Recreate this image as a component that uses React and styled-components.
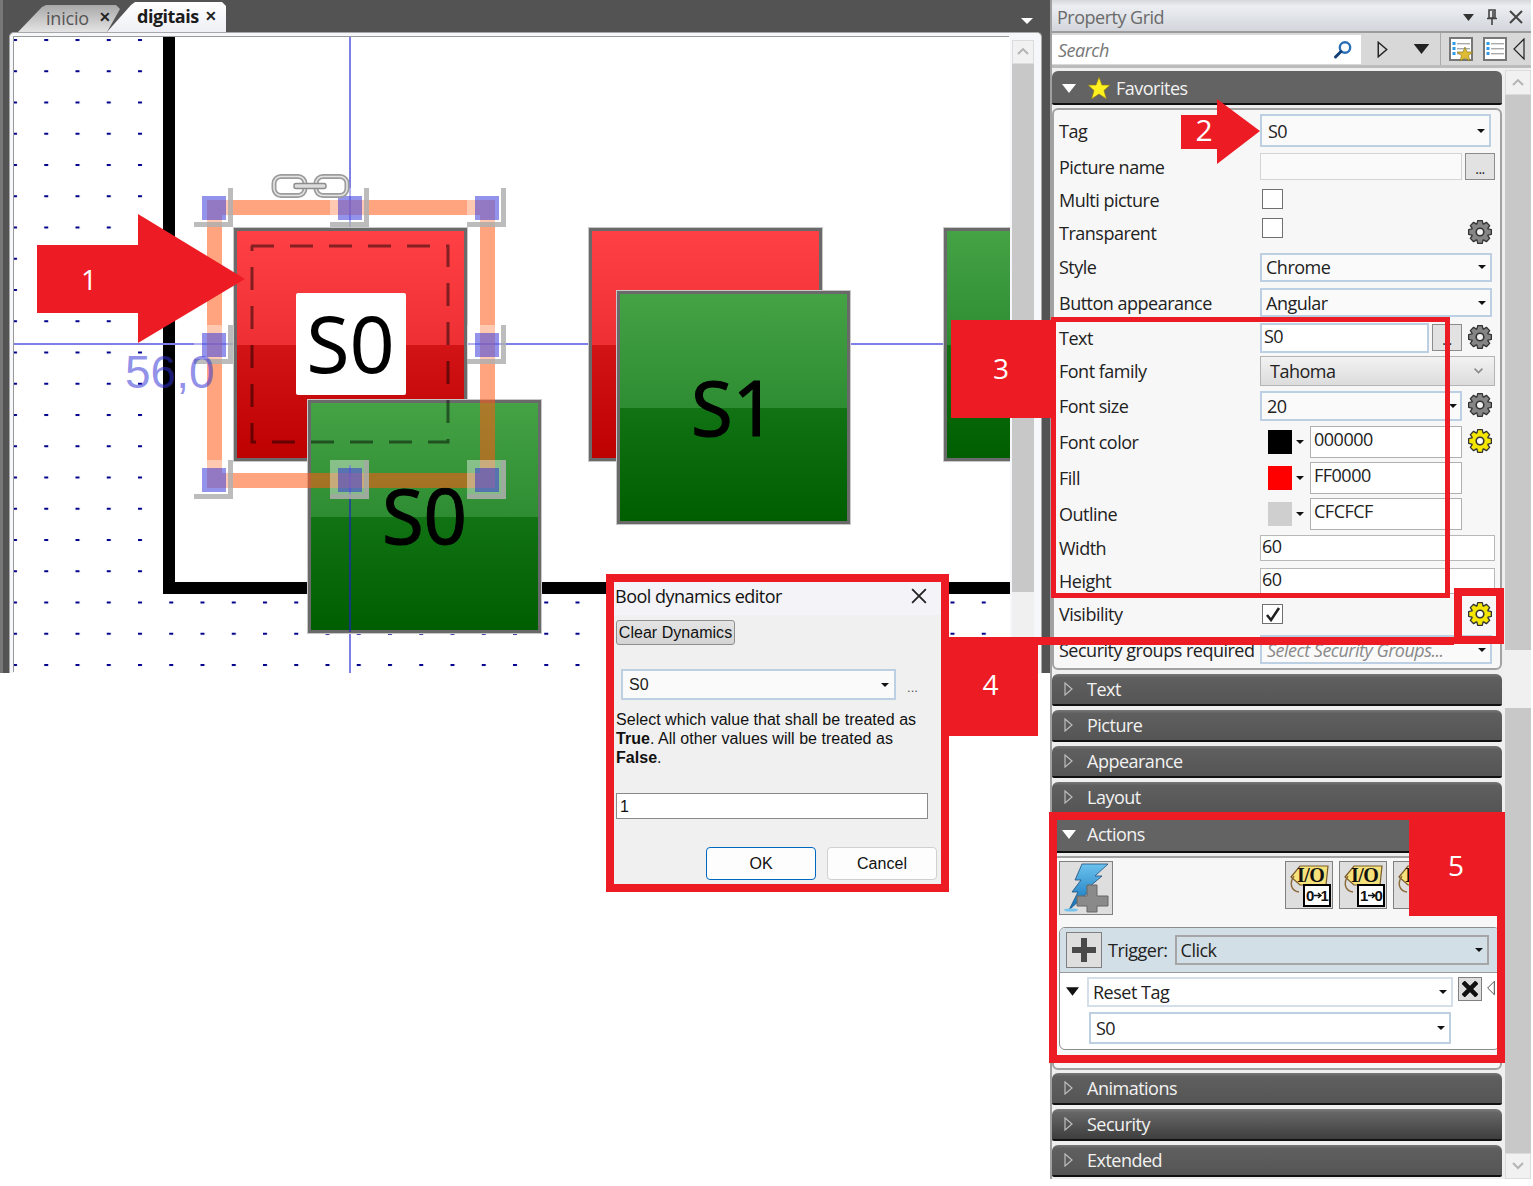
import React from 'react';
import styled, { createGlobalStyle } from 'styled-components';

const RED = '#ed1c24';
const UI_FONT = '"Open Sans", "Noto Sans", sans-serif';

const GlobalStyle = createGlobalStyle`
    html, body { margin: 0; padding: 0; background: #fff; }
    body { font-family: ${UI_FONT}; color: #222; letter-spacing: -0.5px; }
    * { box-sizing: border-box; }
`;

const Page = styled.div`
    position: relative;
    display: flex;
    align-items: flex-start;
    width: 1533px;
    height: 1186px;
    background: #fff;
    overflow: hidden;
`;

/* ---------- designer on the left ---------- */

const Designer = styled.div`
    display: flex;
    flex-direction: column;
    width: 1050px;
    height: 673px;
    background: #535353;
    border-left: 3px solid #777;
`;

const TabBar = styled.div`
    display: flex;
    align-items: flex-end;
    height: 32px;
    padding: 0 17px 0 15px;
    flex-shrink: 0;
`;

const Tab = styled.div`
    display: flex;
    align-items: center;
    justify-content: space-between;
    width: ${p => p.$w}px;
    height: ${p => (p.$active ? 30 : 27)}px;
    margin-right: -13px;
    padding: ${p => (p.$active ? '0 10px 2px 30px' : '0 9px 2px 28px')};
    font-size: 18px;
    font-weight: ${p => (p.$active ? 700 : 400)};
    letter-spacing: ${p => (p.$active ? -0.5 : -0.2)}px;
    color: ${p => (p.$active ? '#1c1c1c' : '#555')};
    background: ${p => (p.$active ? 'linear-gradient(#fff, #eef0f5)' : 'linear-gradient(#a8a8a8, #e4e4e4)')};
    clip-path: ${p => (p.$active
        ? 'polygon(0 100%, 24px 3px, 28px 0, calc(100% - 4px) 0, 100% 4px, 100% 100%)'
        : 'polygon(0 100%, 24px 2px, 28px 0, calc(100% - 4px) 0, 100% 4px, calc(100% - 13px) 100%)')};
    position: relative;
    z-index: ${p => (p.$active ? 2 : 1)};
`;

const TabClose = styled.span`
    font-size: 14px;
    font-weight: 700;
    color: #222;
    transform: translateY(-1px);
`;

const TabMenu = styled.div`
    margin: 0 0 8px auto;
    width: 0;
    height: 0;
    border-left: 6px solid transparent;
    border-right: 6px solid transparent;
    border-top: 6px solid #fff;
`;

const CanvasFrame = styled.div`
    display: flex;
    flex: 1;
    min-height: 0;
    width: 1033px;
    margin-left: 6px;
    padding: 4px 4px 0;
    background: #f6f7fb;
    border: 1px solid #a8a8a8;
    border-bottom: 0;
    border-radius: 5px 5px 0 0;
`;

const Canvas = styled.div`
    position: relative;
    width: 996px;
    flex-shrink: 0;
    background: #fff;
    overflow: hidden;
    box-shadow: -1px -1px 0 #999;
`;

const ScrollColumn = styled.div`
    display: flex;
    flex-direction: column;
    flex-shrink: 0;
    width: ${p => p.$w}px;
    padding: ${p => p.$pad};
`;

const ScrollBtn = styled.div`
    display: flex;
    align-items: center;
    justify-content: center;
    height: ${p => p.$h}px;
    flex-shrink: 0;
    background: #f1f1f1;
    border: 1px solid #dcdcdc;
`;

const ScrollTrack = styled.div`
    height: ${p => p.$h}px;
    flex: ${p => (p.$grow ? 1 : 'none')};
    background: ${p => (p.$light ? '#f0f0f0' : '#c8c8c8')};
`;

const DotSvg = styled.svg`
    position: absolute;
    left: 0;
    top: 0;
    width: 100%;
    height: 100%;
`;

const WorkArea = styled.div`
    position: absolute;
    left: ${163 - 14}px;
    top: -30px;
    width: 1100px;
    height: ${594 - 37 + 30}px;
    background: #fff;
    border: 12px solid #000;
`;

const GuideH = styled.div`
    position: absolute;
    left: 0;
    right: 0;
    top: ${343 - 37}px;
    height: 2px;
    background: #7f7fe8;
`;

const GuideV = styled.div`
    position: absolute;
    left: ${349 - 14}px;
    top: ${p => p.$y1 - 37}px;
    width: 2px;
    height: ${p => p.$y2 - p.$y1}px;
    background: ${p => (p.$over ? 'rgba(30, 30, 210, 0.6)' : '#7f7fe8')};
`;

const HmiButton = styled.div`
    position: absolute;
    left: ${p => p.$x - 14}px;
    top: ${p => p.$y - 37}px;
    width: 233px;
    height: 233px;
    display: flex;
    align-items: center;
    justify-content: center;
    border: 3px solid #6a6a6a;
    outline: 1px solid #c8c8c8;
    font-family: "Noto Sans", sans-serif;
    font-size: ${p => (p.$tone === 'red' ? 79 : 76)}px;
    letter-spacing: 0;
    color: #000;
    -webkit-text-stroke: ${p => (p.$tone === 'red' ? 0 : 1)}px #000;
    background: ${p => (p.$tone === 'red'
        ? 'linear-gradient(#ff4044 0%, #ee3034 50%, #d21416 50%, #bd0000 100%)'
        : 'linear-gradient(#45a245 0%, #2e8c32 50%, #117314 50%, #005e00 100%)')};
`;

const LabelPlate = styled.div`
    display: flex;
    align-items: center;
    justify-content: center;
    width: 110px;
    height: 102px;
    background: #fff;
    border-radius: 2px;
    margin-top: -1px;
`;

const ButtonText = styled.span`
    line-height: 1;
    transform: translateY(${p => p.$dy || 0}px);
`;

const Overlay = styled.svg`
    position: absolute;
    left: ${p => p.$x - 14}px;
    top: ${p => p.$y - 37}px;
`;

const SelectionFrame = styled.div`
    position: absolute;
    left: ${207 - 14}px;
    top: ${200 - 37}px;
    width: 288px;
    height: 288px;
    border: 15px solid rgba(255, 90, 20, 0.55);
`;

const Handle = styled.div`
    position: absolute;
    left: ${p => p.$x - 20 - 14}px;
    top: ${p => p.$y - 20 - 37}px;
    display: grid;
    place-items: center;
    width: 39px;
    height: 39px;
    padding: 5px 0 0 5px;
    background: rgba(255, 255, 255, 0.4);
    border-right: 5px solid rgba(165, 165, 165, 0.75);
    border-bottom: 5px solid rgba(165, 165, 165, 0.75);
`;

const HandleCore = styled.div`
    width: 24px;
    height: 24px;
    background: rgba(40, 40, 215, 0.5);
`;

const CoordLabel = styled.div`
    position: absolute;
    left: ${125 - 14}px;
    top: ${346 - 37}px;
    font-family: "Liberation Sans", sans-serif;
    font-size: 46px;
    line-height: 52px;
    letter-spacing: 0;
    color: rgba(50, 50, 215, 0.55);
`;

/* ---------- property grid on the right ---------- */

const Grid = styled.div`
    display: flex;
    flex-direction: column;
    width: 481px;
    height: 1179px;
    background: #efefef;
    border-left: 2px solid #a0a0a0;
`;

const TitleBar = styled.div`
    display: flex;
    align-items: center;
    height: 33px;
    flex-shrink: 0;
    padding: 3px 8px 0 5px;
    color: #6a6a6a;
    font-size: 18px;
    background: linear-gradient(#d6d8dc, #eceef2 20%, #d2d6dc);
    border-bottom: 2px solid #9c9c9c;
`;

const TitleText = styled.div`
    flex: 1;
`;

const TitleIcons = styled.div`
    display: flex;
    align-items: center;
    gap: 11px;
`;

const SearchBar = styled.div`
    display: flex;
    align-items: center;
    height: 35px;
    flex-shrink: 0;
    background: #d8d8d8;
    border-bottom: 3px solid #bcbcbc;
`;

const SearchBox = styled.div`
    display: flex;
    align-items: center;
    justify-content: space-between;
    width: 309px;
    height: 29px;
    padding: 2px 8px 0 6px;
    background: #fff;
    font-size: 18px;
    font-style: italic;
    color: #777;
`;

const SearchTools = styled.div`
    display: flex;
    align-items: center;
    height: 100%;
`;

const ToolSlot = styled.div`
    display: flex;
    align-items: center;
    justify-content: center;
    width: ${p => p.$w}px;
    height: 100%;
    border-right: ${p => (p.$sep ? '1px solid #aaa' : '0')};
`;

const GridBody = styled.div`
    display: flex;
    flex: 1;
    min-height: 0;
`;

const Sections = styled.div`
    display: flex;
    flex-direction: column;
    width: 453px;
    padding: 3px 3px 0 0;
`;

const SectionHead = styled.div`
    display: flex;
    align-items: center;
    height: ${p => p.$h || 32}px;
    flex-shrink: 0;
    margin-top: ${p => p.$gap ?? 4}px;
    padding: ${p => p.$pt || 0}px 0 ${p => p.$pb || 0}px ${p => (p.$open ? 10 : 12)}px;
    font-size: 18px;
    color: #f2f2f2;
    border-radius: 6px 6px 2px 2px;
    border-bottom: 2px solid #111;
    background: ${p => (p.$open
        ? '#636363'
        : p.$dark
            ? 'linear-gradient(#7c7c7c, #666 12%, #3e3e3e)'
            : 'linear-gradient(#777, #5f5f5f 12%, #555)')};
`;

const HeadMark = styled.span`
    display: inline-flex;
    width: ${p => p.$w}px;
    flex-shrink: 0;
`;

const Body = styled.div`
    margin-top: ${p => p.$top}px;
    height: ${p => p.$h}px;
    flex-shrink: 0;
    background: #f7f7f7;
    border: 2px solid #a2a2a2;
    border-radius: 6px;
    padding: ${p => p.$pad};
`;

const Row = styled.div`
    display: flex;
    align-items: center;
    height: ${p => p.$h}px;
    padding-right: 8px;
    font-size: 18px;
`;

const Label = styled.div`
    width: 201px;
    flex-shrink: 0;
    white-space: nowrap;
    color: #222;
`;

const Select = styled.div`
    display: flex;
    align-items: center;
    justify-content: space-between;
    flex-shrink: 0;
    width: ${p => p.$w}px;
    height: ${p => p.$h}px;
    padding: 0 ${p => p.$padR ?? 4}px 0 ${p => p.$padL ?? 6}px;
    background: ${p => p.$bg || '#fafafa'};
    border: 2px solid ${p => p.$line || '#bccfe3'};
    white-space: nowrap;
    font-style: ${p => (p.$hint ? 'italic' : 'normal')};
    color: ${p => (p.$hint ? '#8a8a8a' : '#222')};
    font-family: ${p => (p.$sans ? '"Liberation Sans", sans-serif' : 'inherit')};
    font-size: ${p => (p.$sans ? 16 : 18)}px;
`;

const Caret = styled.span`
    width: 0;
    height: 0;
    flex-shrink: 0;
    border-left: 4px solid transparent;
    border-right: 4px solid transparent;
    border-top: 4px solid #111;
`;

const TextBox = styled.div`
    display: flex;
    align-items: ${p => (p.$top ? 'flex-start' : 'center')};
    flex-shrink: 0;
    width: ${p => p.$w}px;
    height: ${p => p.$h}px;
    margin-left: ${p => p.$left || 0}px;
    padding: 0 ${p => p.$pad ?? 3}px;
    background: ${p => p.$bg || '#fff'};
    border: ${p => p.$bw || 1}px solid ${p => p.$line || '#b8b8b8'};
    line-height: ${p => p.$lh || 22}px;
`;

const DotsButton = styled.div`
    display: flex;
    align-items: flex-end;
    justify-content: center;
    flex-shrink: 0;
    width: 30px;
    height: 27px;
    margin-left: 3px;
    padding-bottom: 3px;
    font-size: 14px;
    line-height: 14px;
    background: #e2e2e2;
    border: 1px solid #8c8c8c;
`;

const FontCombo = styled.div`
    display: flex;
    align-items: center;
    justify-content: space-between;
    width: 235px;
    height: 30px;
    flex-shrink: 0;
    padding: 0 10px 0 9px;
    background: linear-gradient(#f2f2f2, #dcdcdc);
    border: 1px solid #b4b4b4;
`;

const CheckBox = styled.div`
    display: flex;
    align-items: center;
    justify-content: center;
    width: 21px;
    height: 20px;
    margin-left: 2px;
    flex-shrink: 0;
    background: #fff;
    border: 1px solid #707070;
    transform: translateY(${p => p.$dy || 0}px);
`;

const GearSlot = styled.div`
    display: flex;
    margin-left: auto;
    transform: translateY(${p => p.$dy || 0}px);
`;

const Swatch = styled.div`
    width: 24px;
    height: 24px;
    margin-left: 8px;
    flex-shrink: 0;
    background: ${p => p.$color};
`;

const SwatchCaret = styled(Caret)`
    margin: 0 6px 0 4px;
`;

const ActionBar = styled.div`
    display: flex;
    align-items: flex-start;
`;

const IconButton = styled.div`
    display: flex;
    align-items: center;
    justify-content: center;
    flex-shrink: 0;
    width: ${p => p.$w}px;
    height: ${p => p.$w}px;
    margin-left: ${p => p.$left || 0}px;
    background: #dedede;
    border: 1px solid #808080;
`;

const TriggerPanel = styled.div`
    margin-top: 12px;
    height: 123px;
    background: #fff;
    border: 1px solid #8c8c8c;
    border-radius: 6px;
    overflow: hidden;
`;

const TriggerHead = styled.div`
    display: flex;
    align-items: center;
    height: 45px;
    padding-left: 6px;
    background: #d3dfe6;
    border-bottom: 1px solid #9a9a9a;
    font-size: 18px;
`;

const TriggerLabel = styled.span`
    margin: 0 7px 0 6px;
`;

const ActionRow = styled.div`
    display: flex;
    align-items: flex-start;
    font-size: 18px;
    padding: ${p => p.$pad};
`;

const Expander = styled.span`
    display: flex;
    width: 27px;
    flex-shrink: 0;
    padding: 10px 0 0 6px;
    line-height: 0;
`;

const TriLeftSlot = styled.span`
    display: inline-flex;
    margin: 3px 0 0 5px;
`;

/* ---------- red annotations and the dialog over everything ---------- */

const RedBox = styled.div`
    position: absolute;
    left: ${p => p.$x}px;
    top: ${p => p.$y}px;
    width: ${p => p.$w}px;
    height: ${p => p.$h}px;
    display: flex;
    align-items: center;
    justify-content: center;
    padding: ${p => p.$pad || 0};
    color: #fff;
    font-size: 28px;
    letter-spacing: 0;
    background: ${p => (p.$frame ? 'transparent' : RED)};
    border: ${p => (p.$frame ? `${p.$frame}px solid ${RED}` : '0')};
`;

const ArrowShape = styled.svg`
    position: absolute;
    left: ${p => p.$x}px;
    top: ${p => p.$y}px;
`;

const ArrowNumber = styled.div`
    position: absolute;
    left: ${p => p.$x}px;
    top: ${p => p.$y}px;
    width: 40px;
    text-align: center;
    color: #fff;
    font-size: ${p => p.$size || 28}px;
    letter-spacing: 0;
    line-height: 36px;
`;

const Dialog = styled.div`
    position: absolute;
    left: 606px;
    top: 574px;
    width: 343px;
    height: 318px;
    display: flex;
    flex-direction: column;
    background: #f0f0f0;
    border: 8px solid ${RED};
    font-family: "Liberation Sans", sans-serif;
    font-size: 16px;
    letter-spacing: 0.03px;
    color: #111;
`;

const DialogTitle = styled.div`
    display: flex;
    align-items: center;
    justify-content: space-between;
    height: 33px;
    flex-shrink: 0;
    padding: 0 14px 5px 1px;
    background: #f3f3f8;
    font-family: ${UI_FONT};
    font-size: 18px;
    letter-spacing: -0.5px;
    white-space: nowrap;
`;

const ClearButton = styled.div`
    width: 119px;
    height: 25px;
    margin: 5px 0 0 2px;
    text-align: center;
    line-height: 24px;
    white-space: nowrap;
    background: linear-gradient(#e4e4e4, #d4d4d4);
    border: 1px solid #8e8e8e;
    border-radius: 3px;
`;

const DialogSelectRow = styled.div`
    display: flex;
    align-items: flex-end;
    margin: 24px 0 0 7px;
`;

const Ellipsis = styled.span`
    margin: 0 0 6px 11px;
    font-size: 13px;
    line-height: 13px;
    color: #555;
`;

const DialogText = styled.div`
    margin: 10px 0 0 2px;
    line-height: 19px;
    width: 310px;
`;

const DialogInput = styled.div`
    width: 312px;
    height: 26px;
    margin: 26px 0 0 2px;
    padding-left: 3px;
    line-height: 25px;
    background: #fff;
    border: 1px solid #8a8a8a;
`;

const DialogButtons = styled.div`
    display: flex;
    justify-content: flex-end;
    gap: 11px;
    margin-top: 28px;
    padding-right: 4px;
`;

const DialogButton = styled.div`
    width: 110px;
    height: 33px;
    text-align: center;
    line-height: 31px;
    background: #fdfdfd;
    border: 1px solid ${p => (p.$primary ? '#0067c0' : '#d0d0d0')};
    border-radius: 4px;
`;

/* ---------- drawn icons ---------- */

const gearPath = (outer, inner) => {
    const c = 12;
    const pts = [];
    for (let i = 0; i < 8; i++) {
        const a = (i * Math.PI) / 4;
        [[-0.36, inner], [-0.2, outer], [0.2, outer], [0.36, inner]].forEach(([da, r]) => {
            pts.push(`${(c + r * Math.cos(a + da)).toFixed(2)},${(c + r * Math.sin(a + da)).toFixed(2)}`);
        });
    }
    return pts.join(' ');
};

const Gear = ({ on }) => (
    <svg width="24" height="24" viewBox="0 0 24 24">
        <polygon points={gearPath(11.6, 8.6)} fill={on ? '#f4e600' : '#858585'} stroke="#333" strokeWidth="1.3" strokeLinejoin="round" />
        <circle cx="12" cy="12" r="3.8" fill={on ? '#fff' : '#f2f2f2'} stroke="#333" strokeWidth="1.6" />
    </svg>
);

const TriDown = ({ w = 14, h = 9, color = '#fff' }) => (
    <svg width={w} height={h} viewBox="0 0 14 9"><polygon points="0,0 14,0 7,9" fill={color} /></svg>
);

const TriRight = ({ color = '#bdbdbd', w = 9, h = 14 }) => (
    <svg width={w} height={h} viewBox="0 0 9 14"><polygon points="1,1 8,7 1,13" fill="none" stroke={color} strokeWidth="1.2" /></svg>
);

const TriLeft = ({ w = 12, h = 22 }) => (
    <svg width={w} height={h} viewBox="0 0 12 22"><polygon points="11,1 1,11 11,21" fill="none" stroke="#222" strokeWidth="1.2" /></svg>
);

const Chevron = ({ down, color = '#b4b4b4', size = 14 }) => (
    <svg width={size} height={size * 0.65} viewBox="0 0 14 9">
        <polyline points={down ? '2,2 7,7 12,2' : '2,7 7,2 12,7'} fill="none" stroke={color} strokeWidth="2" />
    </svg>
);

const Star = () => (
    <svg width="24" height="24" viewBox="0 0 24 24">
        <polygon points="12,1 15,9 23,9 17,14.5 19.5,23 12,18 4.5,23 7,14.5 1,9 9,9" fill="#fff21e" stroke="#8a7a20" strokeWidth="0.7" />
    </svg>
);

const PanelIcon = ({ star }) => (
    <svg width="25" height="25" viewBox="0 0 25 25">
        <rect x="1" y="1" width="22" height="22" fill="#fff" stroke="#777" strokeWidth="2" />
        {[6, 11, 16].map(y => (
            <g key={y}>
                <rect x="3.5" y={y - 1} width="3" height="3" fill="#2f9be8" />
                <rect x="8" y={y} width="13" height="1.4" fill="#aaa" />
            </g>
        ))}
        {star && <polygon points="16,10 18,15 24,15 19.5,18.5 21,24 16,21 11,24 12.5,18.5 8,15 14,15" fill="#e0bc34" stroke="#8a7a20" strokeWidth="0.7" />}
    </svg>
);

const Magnifier = () => (
    <svg width="20" height="20" viewBox="0 0 20 20">
        <circle cx="12" cy="7.5" r="5.2" fill="#fff" stroke="#2a6fb5" strokeWidth="2.4" />
        <line x1="8" y1="11.5" x2="2.5" y2="17" stroke="#123f75" strokeWidth="3" strokeLinecap="round" />
    </svg>
);

const Pin = () => (
    <svg width="12" height="16" viewBox="0 0 12 16">
        <path d="M3 1h6v8H3zM7 2v7M1 9.5h10M6 10v6" fill="none" stroke="#444" strokeWidth="1.6" />
    </svg>
);

const CloseX = ({ size = 14, color = '#444', width = 2 }) => (
    <svg width={size} height={size} viewBox="0 0 14 14">
        <path d="M1 1l12 12M13 1L1 13" stroke={color} strokeWidth={width} />
    </svg>
);

const Check = () => (
    <svg width="16" height="15" viewBox="0 0 16 15">
        <path d="M2 8l4 5 8-12" fill="none" stroke="#222" strokeWidth="2.6" />
    </svg>
);

const Chain = () => (
    <svg width="80" height="26" viewBox="0 0 80 26">
        <rect x="3" y="3.5" width="31" height="19" rx="7" fill="#fff" stroke="#9c9c9c" strokeWidth="5" />
        <rect x="45" y="3.5" width="31" height="19" rx="7" fill="#fff" stroke="#9c9c9c" strokeWidth="5" />
        <rect x="3" y="3.5" width="31" height="19" rx="7" fill="none" stroke="#e4e4e4" strokeWidth="1.6" />
        <rect x="45" y="3.5" width="31" height="19" rx="7" fill="none" stroke="#e4e4e4" strokeWidth="1.6" />
        <rect x="23" y="10.5" width="32" height="5" rx="2" fill="#dcdcdc" stroke="#8c8c8c" strokeWidth="1.4" />
    </svg>
);

const Lightning = () => (
    <svg width="50" height="50" viewBox="0 0 50 50">
        <defs>
            <linearGradient id="bolt" x1="0" y1="0" x2="0" y2="1">
                <stop offset="0" stopColor="#6cc2ee" />
                <stop offset="1" stopColor="#0d6fb8" />
            </linearGradient>
        </defs>
        <polygon points="21,1 47,1 34,13 41,13 27,25 32,25 8,47 17,29 11,29 20,17 14,17" fill="url(#bolt)" stroke="#1c4f7c" strokeWidth="0.8" />
        <ellipse cx="10" cy="47" rx="7" ry="1.6" fill="#74c4ee" />
        <path d="M26 22h10v11h11v10H36v6H26v-6H16V33h10z" fill="#8a8a8a" stroke="#666" strokeWidth="1" />
    </svg>
);

const PlusIcon = () => (
    <svg width="26" height="26" viewBox="0 0 26 26">
        <path d="M10 1h6v9h9v6h-9v9h-6v-9H1v-6h9z" fill="#4a4a4a" />
    </svg>
);

const IoIcon = ({ from, to }) => (
    <svg width="44" height="44" viewBox="0 0 44 44">
        <path d="M4 14 L13 3 H41 L39 22 H13 Z" fill="#f6e27a" stroke="#7a5a2a" strokeWidth="1.2" />
        <path d="M7 13 C2 20 4 28 12 29" fill="none" stroke="#8a6a3a" strokeWidth="1.4" />
        <text x="10" y="19" fontFamily="Liberation Serif, serif" fontWeight="700" fontSize="20" fill="#111">I/O</text>
        <rect x="17" y="22" width="26" height="21" fill="#fff" stroke="#000" strokeWidth="2" />
        <text x="19" y="37.5" fontFamily="Liberation Sans, sans-serif" fontWeight="700" fontSize="15" letterSpacing="0" fill="#111">{from}</text>
        <text x="33.5" y="37.5" fontFamily="Liberation Sans, sans-serif" fontWeight="700" fontSize="15" letterSpacing="0" fill="#111">{to}</text>
        <path d="M27 32.5h6M31 30l3 2.5-3 2.5" fill="none" stroke="#111" strokeWidth="1.4" />
    </svg>
);

/* ---------- data ---------- */

const handles = [[214, 208], [350, 208], [487, 208], [214, 345], [487, 345], [214, 480], [350, 480], [487, 480]];

const colorRows = [
    { label: 'Font color', color: '#000', value: '000000', gear: true },
    { label: 'Fill', color: '#ff0000', value: 'FF0000' },
    { label: 'Outline', color: '#cfcfcf', value: 'CFCFCF' },
];

const Head = ({ title, gap, dark }) => (
    <SectionHead $gap={gap} $dark={dark}>
        <HeadMark $w={23}><TriRight /></HeadMark>
        {title}
    </SectionHead>
);

const Favorites = () => (
    <>
        <SectionHead $open $h={34} $gap={0} $pt={2}>
            <HeadMark $w={25}><TriDown /></HeadMark>
            <HeadMark $w={29}><Star /></HeadMark>
            Favorites
        </SectionHead>
        <Body $top={3} $h={562} $pad="3px 0 0 5px">
            <Row $h={35}>
                <Label>Tag</Label>
                <Select $w={231} $h={33}>S0<Caret /></Select>
            </Row>
            <Row $h={37}>
                <Label>Picture name</Label>
                <TextBox $w={202} $h={27} $bg="#fafafa" $line="#d4d4d4" />
                <DotsButton>...</DotsButton>
            </Row>
            <Row $h={30}>
                <Label>Multi picture</Label>
                <CheckBox $dy={-1} />
            </Row>
            <Row $h={35}>
                <Label>Transparent</Label>
                <CheckBox $dy={-5} />
                <GearSlot $dy={-1}><Gear /></GearSlot>
            </Row>
            <Row $h={34}>
                <Label>Style</Label>
                <Select $w={232} $h={29} $padL={4}>Chrome<Caret /></Select>
            </Row>
            <Row $h={37}>
                <Label>Button appearance</Label>
                <Select $w={232} $h={29} $padL={4}>Angular<Caret /></Select>
            </Row>
            <Row $h={33}>
                <Label>Text</Label>
                <TextBox $w={169} $h={30} $bw={2} $line="#bccfe3" $pad={2} $top>S0</TextBox>
                <DotsButton>...</DotsButton>
                <GearSlot $dy={-1}><Gear /></GearSlot>
            </Row>
            <Row $h={34}>
                <Label>Font family</Label>
                <FontCombo>Tahoma<Chevron down color="#8a8a8a" size={11} /></FontCombo>
            </Row>
            <Row $h={36}>
                <Label>Font size</Label>
                <Select $w={202} $h={30} $padL={5} $padR={3}>20<Caret /></Select>
                <GearSlot $dy={-1}><Gear /></GearSlot>
            </Row>
            {colorRows.map(r => (
                <Row $h={36} key={r.label}>
                    <Label>{r.label}</Label>
                    <Swatch $color={r.color} />
                    <SwatchCaret />
                    <TextBox $w={152} $h={32} $top $lh={25} $line="#b0b0b0">{r.value}</TextBox>
                    {r.gear && <GearSlot $dy={-1}><Gear on /></GearSlot>}
                </Row>
            ))}
            <Row $h={32}>
                <Label>Width</Label>
                <TextBox $w={235} $h={26} $pad={1} $top $lh={20}>60</TextBox>
            </Row>
            <Row $h={33}>
                <Label>Height</Label>
                <TextBox $w={235} $h={26} $pad={1} $top $lh={20}>60</TextBox>
            </Row>
            <Row $h={34}>
                <Label>Visibility</Label>
                <CheckBox><Check /></CheckBox>
                <GearSlot><Gear on /></GearSlot>
            </Row>
            <Row $h={37}>
                <Label>Security groups required</Label>
                <Select $w={232} $h={29} $padL={5} $hint>Select Security Groups...<Caret /></Select>
            </Row>
        </Body>
    </>
);

const Actions = () => (
    <>
        <SectionHead $open $h={35} $pb={1}>
            <HeadMark $w={25}><TriDown /></HeadMark>
            Actions
        </SectionHead>
        <Body $top={3} $h={214} $pad="3px 0 0 5px">
            <ActionBar>
                <IconButton $w={54}><Lightning /></IconButton>
                <IconButton $w={48} $left={172}><IoIcon from="0" to="1" /></IconButton>
                <IconButton $w={48} $left={6}><IoIcon from="1" to="0" /></IconButton>
                <IconButton $w={48} $left={6}><IoIcon from="0" to="1" /></IconButton>
            </ActionBar>
            <TriggerPanel>
                <TriggerHead>
                    <IconButton $w={36}><PlusIcon /></IconButton>
                    <TriggerLabel>Trigger:</TriggerLabel>
                    <Select $w={314} $h={30} $padL={4} $bg="#d3dfe6" $line="#a6a6a6">Click<Caret /></Select>
                </TriggerHead>
                <ActionRow $pad="4px 0 0 0">
                    <Expander><TriDown w={13} h={9} color="#111" /></Expander>
                    <Select $w={366} $h={30} $padL={4} $line="#d4dfea" $bg="#fff">Reset Tag<Caret /></Select>
                    <IconButton $w={24} $left={5}><CloseX size={16} color="#111" width={4} /></IconButton>
                    <TriLeftSlot><TriLeft w={8} h={16} /></TriLeftSlot>
                </ActionRow>
                <ActionRow $pad="5px 0 0 29px">
                    <Select $w={362} $h={32} $padL={5} $bg="#fff">S0<Caret /></Select>
                </ActionRow>
            </TriggerPanel>
        </Body>
    </>
);

const App = () => (
    <Page>
        <GlobalStyle />
        <Designer>
            <TabBar>
                <Tab $w={102}>inicio<TabClose>✕</TabClose></Tab>
                <Tab $w={119} $active>digitais<TabClose>✕</TabClose></Tab>
                <TabMenu />
            </TabBar>
            <CanvasFrame>
                <Canvas>
                    <DotSvg>
                        <defs>
                            <pattern id="dots" x="-1" y="2" width="31.25" height="31.25" patternUnits="userSpaceOnUse">
                                <rect x="0" y="0" width="4" height="2" fill="#00008b" />
                            </pattern>
                        </defs>
                        <rect width="100%" height="100%" fill="url(#dots)" />
                    </DotSvg>
                    <WorkArea />
                    <GuideH />
                    <GuideV $y1={37} $y2={673} />
                    <HmiButton $x={589} $y={228} $tone="red" />
                    <HmiButton $x={617} $y={291} $tone="green"><ButtonText $dy={-1}>S1</ButtonText></HmiButton>
                    <HmiButton $x={944} $y={228} $tone="green" />
                    <HmiButton $x={234} $y={228} $tone="red">
                        <LabelPlate><ButtonText $dy={-2}>S0</ButtonText></LabelPlate>
                    </HmiButton>
                    <HmiButton $x={308} $y={400} $tone="green"><ButtonText $dy={-2}>S0</ButtonText></HmiButton>
                    <GuideV $y1={465} $y2={632} $over />
                    <Overlay $x={249} $y={243} width="203" height="203">
                        <path d="M2 3H199V199H3V3" fill="none" stroke="rgba(0,0,0,0.47)" strokeWidth="3" strokeDasharray="23 16" />
                    </Overlay>
                    <SelectionFrame />
                    {handles.map(([x, y]) => (
                        <Handle key={`${x}-${y}`} $x={x} $y={y}><HandleCore /></Handle>
                    ))}
                    <Overlay $x={271} $y={173} width="80" height="26"><Chain /></Overlay>
                    <CoordLabel>56,0</CoordLabel>
                </Canvas>
                <ScrollColumn $w={27} $pad="3px 3px 0 2px">
                    <ScrollBtn $h={24}><Chevron /></ScrollBtn>
                    <ScrollTrack $h={528} />
                    <ScrollTrack $grow $light />
                </ScrollColumn>
            </CanvasFrame>
        </Designer>

        <Grid>
            <TitleBar>
                <TitleText>Property Grid</TitleText>
                <TitleIcons>
                    <TriDown w={13} h={7} color="#333" />
                    <Pin />
                    <CloseX />
                </TitleIcons>
            </TitleBar>
            <SearchBar>
                <SearchBox>Search<Magnifier /></SearchBox>
                <SearchTools>
                    <ToolSlot $w={42}><TriRight color="#222" w={11} h={17} /></ToolSlot>
                    <ToolSlot $w={38} $sep><TriDown w={17} h={10} color="#222" /></ToolSlot>
                    <ToolSlot $w={40}><PanelIcon star /></ToolSlot>
                    <ToolSlot $w={28}><PanelIcon /></ToolSlot>
                    <ToolSlot $w={20}><TriLeft /></ToolSlot>
                </SearchTools>
            </SearchBar>
            <GridBody>
                <Sections>
                    <Favorites />
                    <Head title="Text" />
                    <Head title="Picture" />
                    <Head title="Appearance" />
                    <Head title="Layout" />
                    <Actions />
                    <Head title="Animations" gap={3} />
                    <Head title="Security" dark />
                    <Head title="Extended" />
                </Sections>
                <ScrollColumn $w={26} $pad="2px 0 0 0">
                    <ScrollBtn $h={25}><Chevron /></ScrollBtn>
                    <ScrollTrack $h={555} />
                    <ScrollTrack $h={58} $light />
                    <ScrollTrack $grow />
                    <ScrollBtn $h={26}><Chevron down /></ScrollBtn>
                </ScrollColumn>
            </GridBody>
        </Grid>

        {/* annotation 1 */}
        <ArrowShape $x={37} $y={214} width="208" height="130">
            <polygon points="0,31 101,31 101,0 208,65 101,129 101,99 0,99" fill={RED} />
        </ArrowShape>
        <ArrowNumber $x={69} $y={261}>1</ArrowNumber>

        {/* annotation 2 */}
        <ArrowShape $x={1181} $y={99} width="79" height="65">
            <polygon points="0,16 36,16 36,0 79,32 36,65 36,50 0,50" fill={RED} />
        </ArrowShape>
        <ArrowNumber $x={1184} $y={112} $size={30}>2</ArrowNumber>

        {/* annotation 3 */}
        <RedBox $x={1051} $y={317} $w={399} $h={281} $frame={5} />
        <RedBox $x={951} $y={320} $w={100} $h={98} $pad="0 0 2px 0">3</RedBox>

        {/* annotation 4 and the visibility highlight */}
        <RedBox $x={1454} $y={588} $w={50} $h={56} $frame={8} />
        <RedBox $x={941} $y={637} $w={513} $h={8} />
        <RedBox $x={949} $y={645} $w={89} $h={91} $pad="0 6px 13px 0">4</RedBox>
        <Dialog>
            <DialogTitle>Bool dynamics editor<CloseX size={16} color="#222" width={1.6} /></DialogTitle>
            <ClearButton>Clear Dynamics</ClearButton>
            <DialogSelectRow>
                <Select $w={275} $h={31} $padR={5} $sans>S0<Caret /></Select>
                <Ellipsis>...</Ellipsis>
            </DialogSelectRow>
            <DialogText>
                Select which value that shall be treated as <b>True</b>. All other values will be treated as <b>False</b>.
            </DialogText>
            <DialogInput>1</DialogInput>
            <DialogButtons>
                <DialogButton $primary>OK</DialogButton>
                <DialogButton>Cancel</DialogButton>
            </DialogButtons>
        </Dialog>

        {/* annotation 5 */}
        <RedBox $x={1049} $y={812} $w={456} $h={251} $frame={8} />
        <RedBox $x={1409} $y={820} $w={88} $h={96} $pad="0 0 6px 6px">5</RedBox>
    </Page>
);

export default App;
